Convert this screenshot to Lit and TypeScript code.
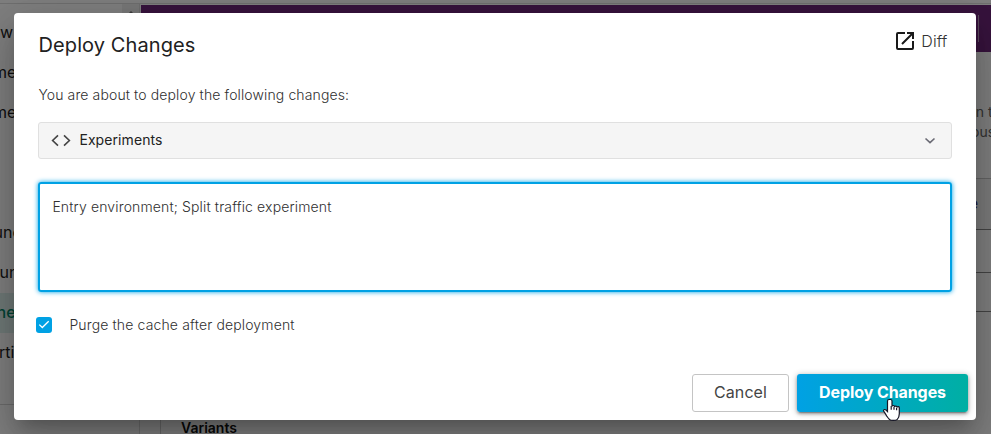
import { LitElement, html, css, svg } from "lit";
import { customElement, state } from "lit/decorators.js";

const navItems = [
  { label: "w", shift: 0 },
  { label: "me", shift: -7 },
  { label: "me", shift: -7 },
  { label: "", shift: 0 },
  { label: "", shift: 0 },
  { label: "und", shift: -6.5 },
  { label: "un", shift: -0.5 },
  { label: "ne", shift: -3.5, active: true },
  { label: "rtif", shift: -1 },
];

@customElement("page-behind")
class PageBehind extends LitElement {
  static styles = css`
    :host { display: flex; flex-direction: column; height: 434px; background: #fff; overflow: hidden; color: #222; font: 400 16px/20px Inter, sans-serif; }
    .strip { flex: none; height: 3px; border-bottom: 1px solid #dedede; display: flex; }
    .body { flex: 1; display: flex; min-height: 0; }
    .side { width: 139px; flex: none; border-right: 1px solid #ddd; display: flex; flex-direction: column; }
    .top { display: flex; flex: none; height: 400px; }
    .nav { width: 122px; padding-top: 9px; }
    .item { height: 40px; line-height: 38px; white-space: nowrap; }
    .item span { display: inline-block; }
    .item.active { background: #dff3ee; color: #008768; font-weight: 500; }
    .track { width: 17px; background: #f0f0f0; display: flex; justify-content: center; padding-top: 7px; box-sizing: border-box; }
    .arrow { width: 0; height: 0; border: 4px solid transparent; border-top: 0; border-bottom: 4px solid #777; }
    .foot { border-top: 1px solid #d6d6d6; flex: 1; }
    .main { flex: 1; display: flex; flex-direction: column; min-width: 0; }
    .bar { height: 47px; flex: none; margin: 1px 0 0 1px; background: #6f267b; display: flex; justify-content: flex-end; align-items: flex-start; }
    .divider { width: 1px; height: 27px; margin: 10px 12px 0 0; background: #b994bd; }
    .content { flex: 1; display: flex; flex-direction: column; align-items: flex-end; }
    .note { width: 24px; height: 126px; box-sizing: border-box; padding-top: 50px; font-size: 14px; color: #666; white-space: nowrap; }
    .note div { height: 20px; }
    .note .first { margin-left: 1px; }
    .note .second { margin-left: 4px; }
    .row { align-self: stretch; border-top: 1px solid #c8c8c8; box-sizing: border-box; text-align: right; color: #3c3277; }
    .shade { height: 51px; background: #f6f6f6; line-height: 49px; padding-right: 13px; }
    .plain { height: 43px; border-color: #888; }
    .last { height: 39px; border-color: #888; }
    .panel { align-self: stretch; flex: 1; border-top: 1px solid #888; display: flex; align-items: flex-end; padding-left: 20px; }
    .card { border-left: 1px solid #d0d0d0; height: 123px; box-sizing: border-box; padding: 106px 0 0 20px; font-size: 14px; line-height: 20px; font-weight: 600; color: #111; }
  `;
  render() {
    return html`
      <div class="strip"></div>
      <div class="body">
        <div class="side">
          <div class="top">
            <div class="nav">
              ${navItems.map((n) => html`<div class="item ${n.active ? "active" : ""}"><span style="margin-left:${n.shift}px">${n.label}</span></div>`)}
            </div>
            <div class="track"><div class="arrow"></div></div>
          </div>
          <div class="foot"></div>
        </div>
        <div class="main">
          <div class="bar"><div class="divider"></div></div>
          <div class="content">
            <div class="note"><div class="first">vn t</div><div class="second">ous</div></div>
            <div class="row shade">e</div>
            <div class="row plain"></div>
            <div class="row last"></div>
            <div class="panel"><div class="card">Variants</div></div>
          </div>
        </div>
      </div>`;
  }
}

@customElement("deploy-dialog")
class DeployDialog extends LitElement {
  @state() private message = "Entry environment; Split traffic experiment";

  static styles = css`
    :host { display: flex; flex-direction: column; box-sizing: border-box; width: 962px; height: 407px; padding: 16px 24px 8px; border-radius: 4px; background: #fff; color: #303030; font: 300 14px/20px Inter, sans-serif; letter-spacing: 0.14px;
      box-shadow: 0 11px 15px -7px rgba(0,0,0,.2), 0 24px 38px 3px rgba(0,0,0,.14), 0 9px 46px 8px rgba(0,0,0,.12); }
    header { display: flex; justify-content: space-between; height: 32px; }
    h1 { margin: 0 0 0 0.5px; font-size: 20px; line-height: 32px; font-weight: 400; color: #212121; letter-spacing: 0.1px; }
    .diff { display: flex; gap: 4px; align-items: center; height: 24px; font-size: 16px; letter-spacing: 0.1px; padding-right: 4.500px; color: #333; }
    svg { display: block; flex: none; }
    .intro { margin: 24px 0 17px 0.4px; letter-spacing: 0.12px; }
    .select { display: flex; align-items: center; box-sizing: border-box; height: 37px; border: 1px solid #e0e0e0; border-radius: 3px; background: #f5f5f5; padding: 0 15px 0 12px; color: #222; font-weight: 400; }
    .select .name { flex: 1; margin: -2px 0 0 8.400px; letter-spacing: 0.08px; }
    .message { box-sizing: border-box; height: 110px; margin-top: 23px; flex: none; border: 2px solid #00a1e4; border-radius: 3px; padding: 13px 12px 13px 12.400px; box-shadow: 0 0 5px #00a1e4; }
    .check { display: flex; align-items: center; gap: 17.400px; margin: 23px 0 0 -2px; }
    .box { width: 16px; height: 16px; border-radius: 3px; background: #00a1e4; }
    footer { display: flex; justify-content: flex-end; gap: 8px; margin: auto -16px 0 0; }
    button { box-sizing: border-box; height: 38px; border-radius: 3px; padding: 0 0 2px; font: 400 16px/34px Inter, sans-serif; }
    .cancel { width: 97px; border: 1px solid #c4c4c4; background: #fff; color: #444; letter-spacing: 0.1px; }
    .deploy { width: 171px; border: 0; color: #fff; font-weight: 700; letter-spacing: -0.08px; background: linear-gradient(90deg, #00a1e4, #00afa3); box-shadow: 0 3px 1px -2px rgba(0,0,0,.2), 0 2px 3px rgba(0,0,0,.25), 0 1px 6px rgba(0,0,0,.3); }
  `;
  render() {
    return html`
      <header>
        <h1>Deploy Changes</h1>
        <div class="diff">
          <svg width="24" height="24" viewBox="0 0 24 24" fill="none" stroke="#1a1a1a" stroke-width="2"><path d="M12 4H5Q4 4 4 5v14q0 1 1 1h14q1 0 1-1v-7M14 4h6v6M20 4 9 15"/></svg>
          <span>Diff</span>
        </div>
      </header>
      <div class="intro">You are about to deploy the following changes:</div>
      <div class="select">
        <svg width="20" height="20" viewBox="0 0 20 20" fill="none" stroke="#444" stroke-width="1.6"><path d="M7 4.300 1.600 9.500 7 14.700M13 4.300 18.400 9.500 13 14.700"/></svg>
        <span class="name">Experiments</span>
        <svg width="12" height="12" viewBox="0 0 12 12" fill="none" stroke="#6a6a74" stroke-width="1.6"><path d="m1.500 3.500 4.500 4.200 4.500-4.200"/></svg>
      </div>
      <div class="message">${this.message}</div>
      <div class="check">
        <svg class="box" viewBox="0 0 16 16" fill="none" stroke="#fff" stroke-width="1.3"><path d="m3.300 7.600 3 2.900 6.400-6.300"/></svg>
        <span>Purge the cache after deployment</span>
      </div>
      <footer><button class="cancel">Cancel</button><button class="deploy">Deploy Changes</button></footer>`;
  }
}

const pointer = svg`<path d="M7 1.500c-1 0-1.500.6-1.500 1.500v10.500L4 12c-.8-.8-2.300-.6-2.500.3-.1.600.3 1.100.7 1.600l2.600 4.200c.9 1.300 1.500 2.300 2.500 3.200 1.500 1.500 6.500 1.500 8 0 1.400-1.500 2-3.200 2-5.500V9.800c0-1.300-1.700-1.700-2.100-.4-.1-1.500-2.200-1.900-2.500-.6-.2-1.500-2.200-1.800-2.700-.4V3c0-.9-.5-1.500-1.500-1.500Z" fill="#fff" stroke="#151525" stroke-width="1.200"/><path d="M9.200 8v3.800M12 8.800v3M14.600 9.700v2.500" fill="none" stroke="#151525" stroke-width="1.200"/>`;

@customElement("app-root")
class AppRoot extends LitElement {
  static styles = css`
    :host { display: block; position: relative; width: 991px; height: 434px; overflow: hidden; }
    .backdrop { position: absolute; inset: 0; display: flex; align-items: flex-start; padding: 13px 15px 0 14px; background: rgba(0,0,0,.5); }
    .pointer { position: absolute; left: 882px; top: 398px; width: 19px; height: 25px; }
  `;
  render() {
    return html`
      <page-behind></page-behind>
      <div class="backdrop"><deploy-dialog></deploy-dialog></div>
      <svg class="pointer" viewBox="0 0 19 25">${pointer}</svg>`;
  }
}
